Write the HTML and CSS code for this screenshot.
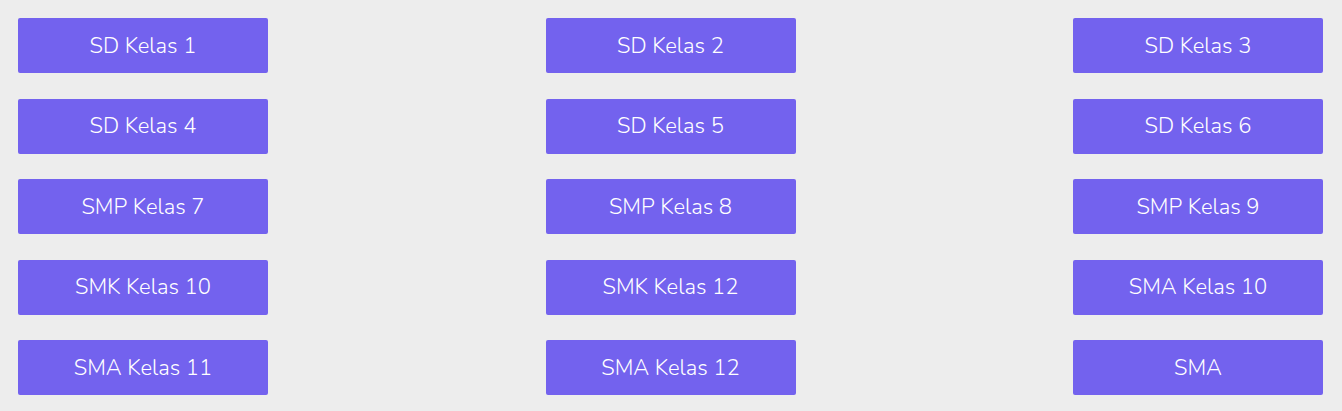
FILE: index.html
```html
<!DOCTYPE html>
<html lang="id">
<head>
  <meta charset="UTF-8" />
  <meta name="viewport" content="width=device-width, initial-scale=1.0"/>
  <title>Pilih Kelas</title>
  <link rel="stylesheet" href="styles.css">
</head>
<body>
  <div class="grid">
    <a class="kelas" href="#">SD Kelas 1</a>
    <a class="kelas" href="#">SD Kelas 2</a>
    <a class="kelas" href="#">SD Kelas 3</a>
    <a class="kelas" href="#">SD Kelas 4</a>
    <a class="kelas" href="#">SD Kelas 5</a>
    <a class="kelas" href="#">SD Kelas 6</a>
    <a class="kelas" href="#">SMP Kelas 7</a>
    <a class="kelas" href="#">SMP Kelas 8</a>
    <a class="kelas" href="#">SMP Kelas 9</a>
    <a class="kelas" href="#">SMK Kelas 10</a>
    <a class="kelas" href="#">SMK Kelas 12</a>
    <a class="kelas" href="#">SMA Kelas 10</a>
    <a class="kelas" href="#">SMA Kelas 11</a>
    <a class="kelas" href="#">SMA Kelas 12</a>
    <a class="kelas" href="#">SMA</a>
  </div>
</body>
</html>
```

FILE: styles.css
```css
body {
  margin: 0;
  padding: 0;
  background: #ededed;
  font-family: 'Nunito', 'Lato', sans-serif;
}

.grid {
  display: grid;
  grid-template-columns: repeat(3, 250px);
  column-gap: 277.5px;
  row-gap: 25.5px;
  padding: 18px 19px 16px 18px;
}

.kelas {
  display: flex;
  align-items: center;
  justify-content: center;
  height: 55px;
  background: #7362ee;
  color: #fff;
  font-size: 22px;
  font-weight: 300;
  text-decoration: none;
  border-radius: 2px;
}
```
